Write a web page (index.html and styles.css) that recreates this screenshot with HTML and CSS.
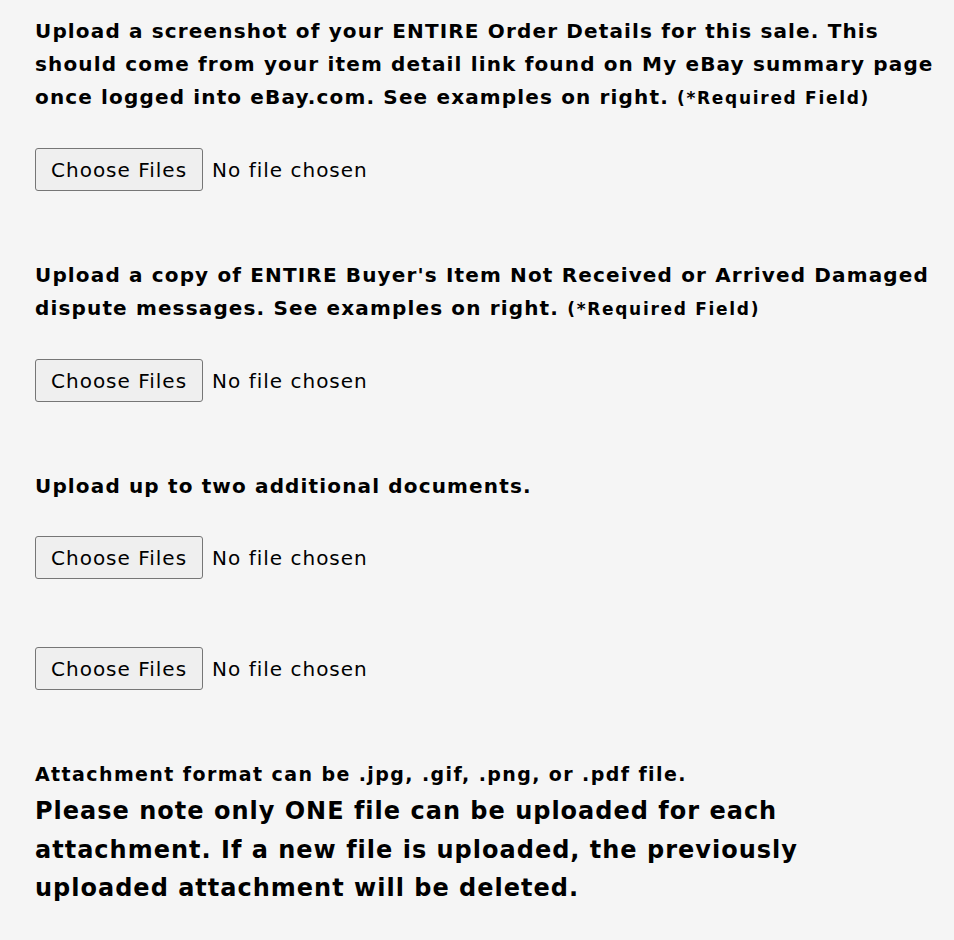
FILE: index.html
```html
<!DOCTYPE html>
<html lang="en">
<head>
<meta charset="utf-8">
<title>Upload documents</title>
<link rel="stylesheet" href="styles.css">
</head>
<body>
<main class="page">
  <p class="label">Upload a screenshot of your ENTIRE Order Details for this sale. This should come from your item detail link found on My eBay summary page once logged into eBay.com. See examples on right. <span class="req">(*Required Field)</span></p>
  <div class="file"><span class="file-btn">Choose Files</span><span class="file-name">No file chosen</span></div>

  <p class="label gap">Upload a copy of ENTIRE Buyer's Item Not Received or Arrived Damaged dispute messages. See examples on right. <span class="req">(*Required Field)</span></p>
  <div class="file"><span class="file-btn">Choose Files</span><span class="file-name">No file chosen</span></div>

  <p class="label gap">Upload up to two additional documents.</p>
  <div class="file"><span class="file-btn">Choose Files</span><span class="file-name">No file chosen</span></div>
  <div class="file gap"><span class="file-btn">Choose Files</span><span class="file-name">No file chosen</span></div>

  <p class="format">Attachment format can be .jpg, .gif, .png, or .pdf file.</p>
  <p class="note">Please note only ONE file can be uploaded for each attachment. If a new file is uploaded, the previously uploaded attachment will be deleted.</p>
</main>
</body>
</html>
```
FILE: styles.css
```css
html, body {
  margin: 0;
  background: #f5f5f5;
}
.page {
  padding: 15px 14px 20px 35px;
  font-family: "DejaVu Sans", Verdana, sans-serif;
  color: #000;
}
.label {
  margin: 0;
  font-size: 20px;
  line-height: 33px;
  font-weight: bold;
  letter-spacing: 1.15px;
  max-width: 905px;
}
.label.gap {
  margin-top: 68px;
}
.req {
  font-size: 17px;
  letter-spacing: 1.7px;
}
.file {
  display: flex;
  align-items: center;
  margin-top: 33px;
  font-size: 20px;
  letter-spacing: 1px;
  height: 43px;
}
.file.gap {
  margin-top: 68px;
}
.file-btn {
  box-sizing: border-box;
  height: 43px;
  padding: 0 15px;
  display: flex;
  align-items: center;
  background: #efefef;
  border: 1px solid #767676;
  border-radius: 3px;
}
.file-name {
  margin-left: 9px;
}
.format {
  margin: 70px 0 0;
  font-weight: bold;
  font-size: 19px;
  line-height: 28px;
  letter-spacing: 1.4px;
}
.note {
  margin: 4px 0 0;
  font-weight: bold;
  font-size: 24px;
  line-height: 38.5px;
  letter-spacing: 1px;
  max-width: 830px;
}
```
